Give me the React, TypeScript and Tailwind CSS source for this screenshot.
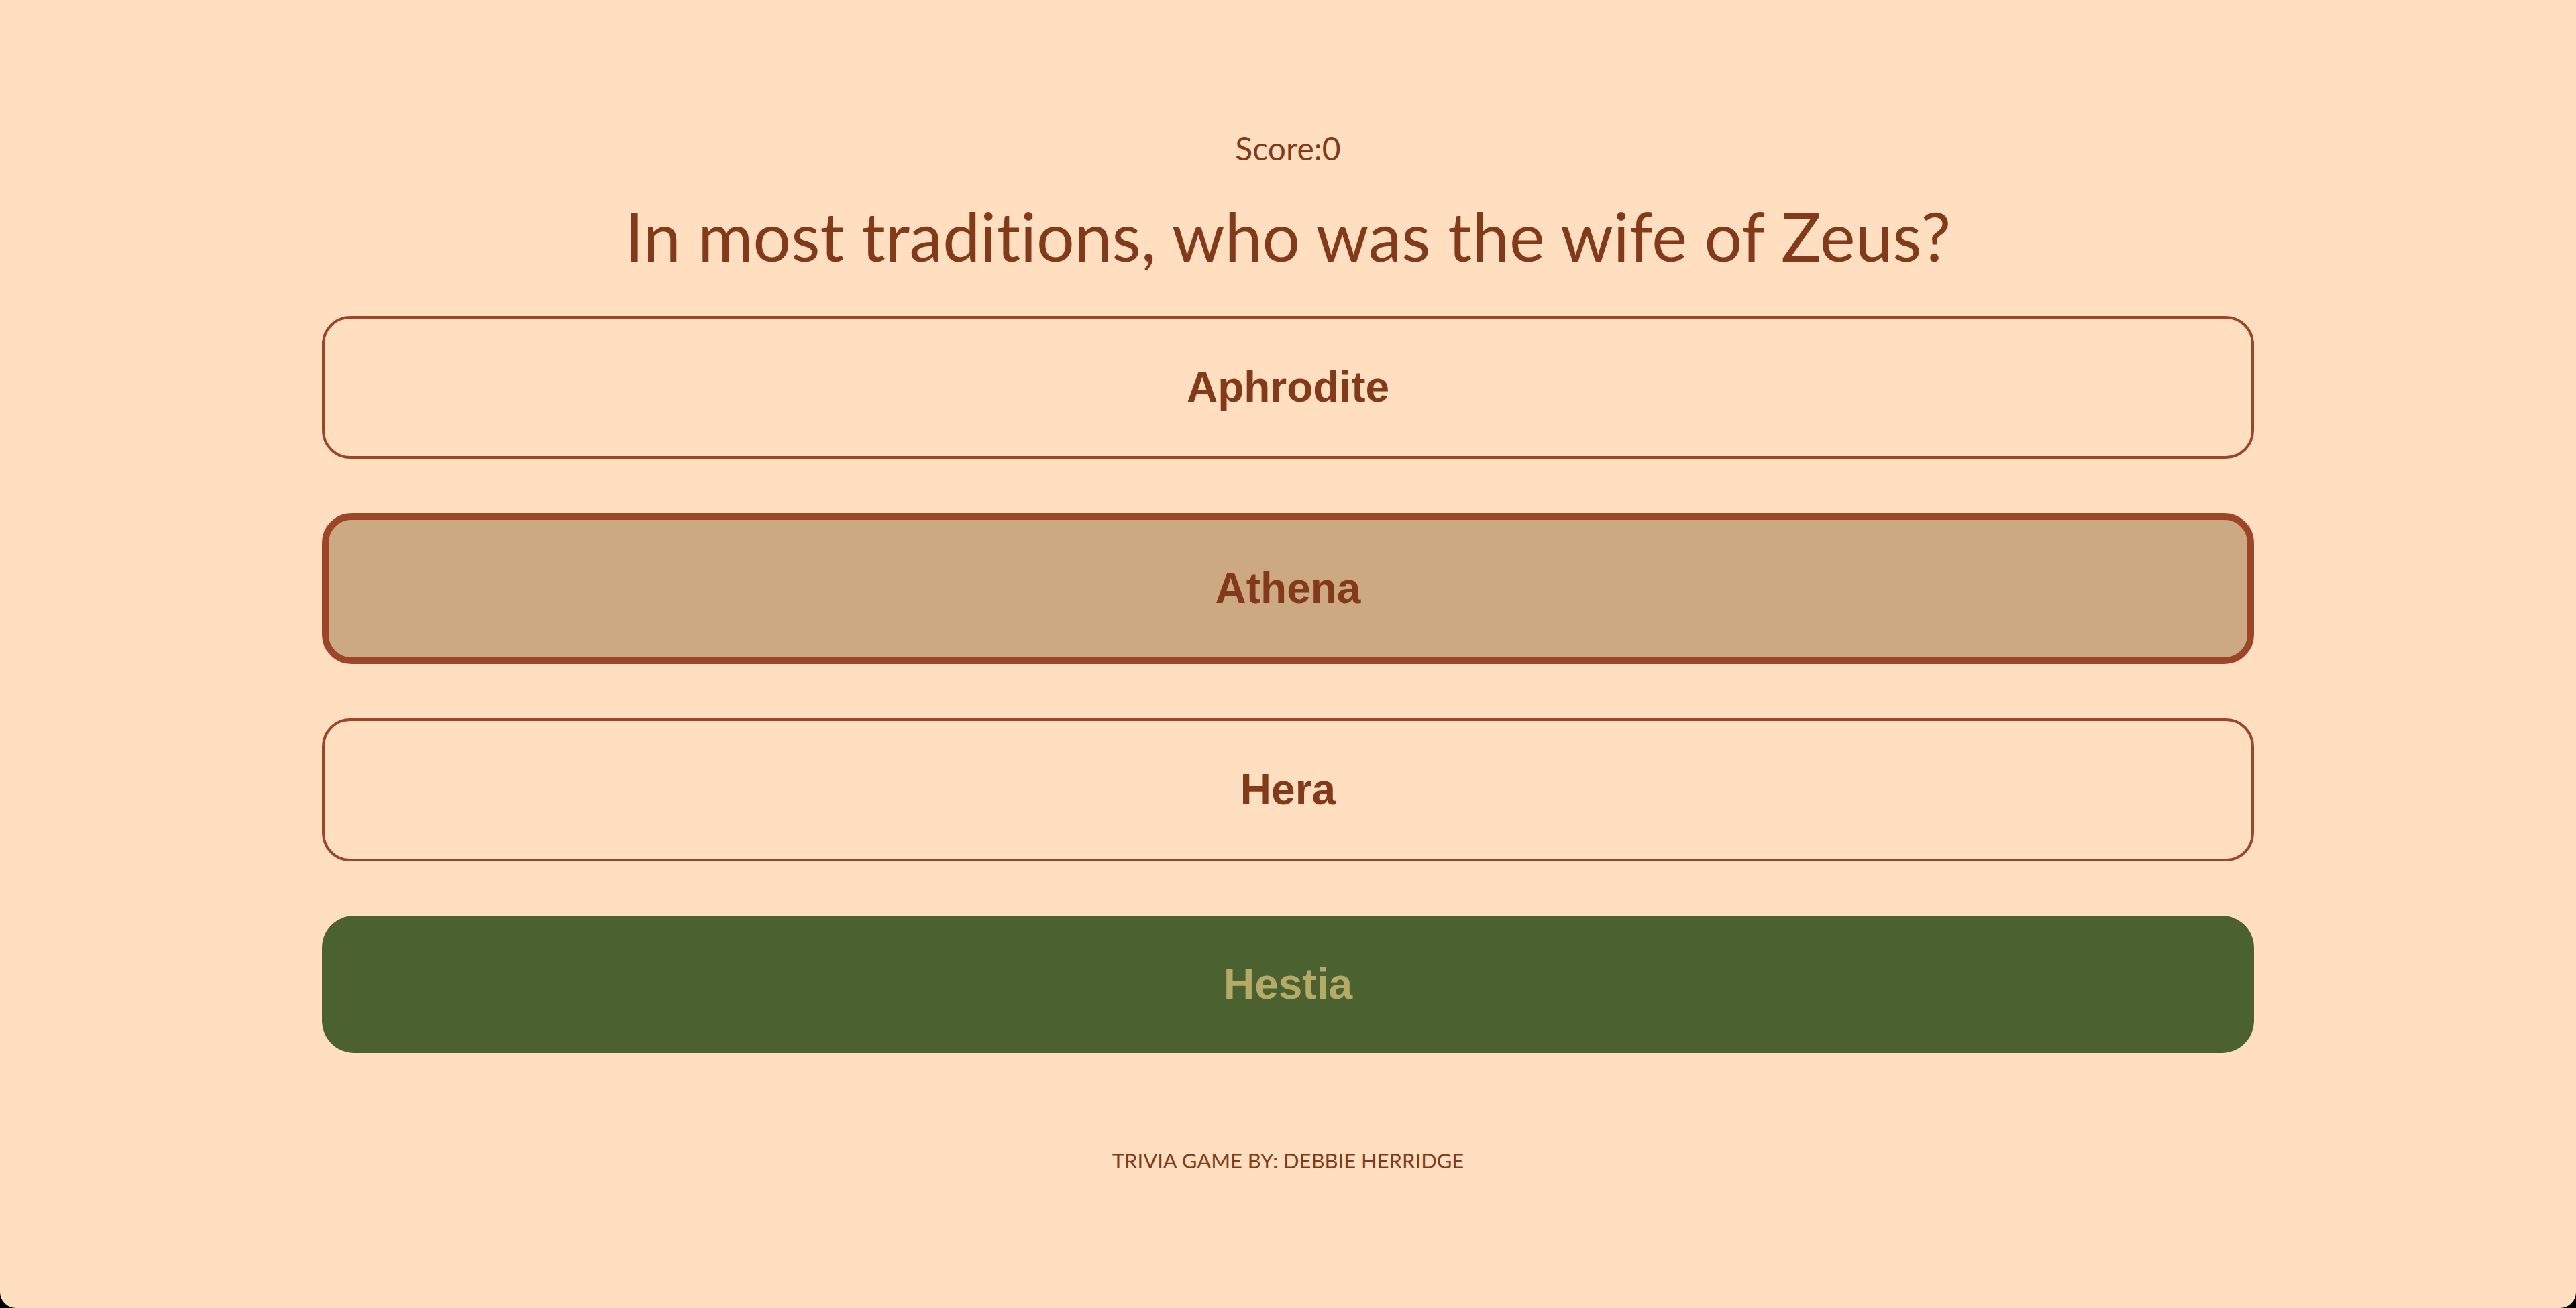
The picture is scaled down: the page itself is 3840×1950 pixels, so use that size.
const answers = [
  { label: "Aphrodite", state: "idle" },
  { label: "Athena", state: "selected" },
  { label: "Hera", state: "idle" },
  { label: "Hestia", state: "correct" },
];

export default function App() {
  return (
    <div className="min-h-[1950px] bg-black">
      <div className="flex h-[1950px] flex-col items-center rounded-b-[24px] bg-[#FFDFC0] font-['Lato','Open_Sans',sans-serif] text-[#823A1A] [font-variant-ligatures:none]">
        <p className="mt-[193px] text-[48px] leading-[56px]">Score:0</p>
        <h1 className="mt-[46px] text-[100px] leading-[112px]">
          In most traditions, who was the wife of Zeus?
        </h1>

        <div className="mt-[64px] flex w-[75%] flex-col gap-[81px]">
          {answers.map((a) => {
            let cls = "border-[4px] border-[#9C4529] bg-transparent text-[#823A1A] rounded-[42px]";
            if (a.state === "selected") cls = "border-[10px] border-[#9C4529] bg-[#CDA982] text-[#823A1A] rounded-[44px]";
            if (a.state === "correct") cls = "bg-[#4C6130] text-[#B5AB69] rounded-[48px]";
            return (
              <button
                key={a.label}
                className={`w-full py-[65px] text-center font-['Liberation_Sans',Arial,sans-serif] text-[64px] font-bold leading-[75px] ${cls}`}
              >
                {a.label}
              </button>
            );
          })}
        </div>

        <footer className="mt-[140px] text-[31px] leading-[40px] uppercase">
          Trivia game by: Debbie Herridge
        </footer>
      </div>
    </div>
  );
}
